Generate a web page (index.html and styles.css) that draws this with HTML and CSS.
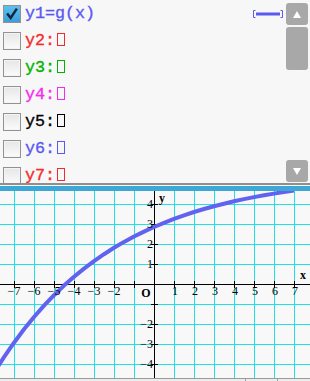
FILE: index.html
```html
<!DOCTYPE html>
<html lang="en">
<head>
  <meta charset="UTF-8" />
  <title>Graph Editor</title>
  <link rel="stylesheet" href="styles.css">
</head>
<body>
  <div class="app">
    <div class="panel">
      <ul class="rows">
        <li class="row">
          <span class="check on">
            <svg viewBox="0 0 18 18" width="16" height="16"><path d="M3.5 8.5 L7.5 13.5 L14.5 3" fill="none" stroke="#15243f" stroke-width="2.8"/></svg>
          </span>
          <span class="fn blue">y1=g(x)</span>
          <span class="line-style">
            <svg viewBox="0 0 30 8" width="30" height="8"><path d="M2.5 0.5 H0.5 V7.5 H2.5 M27.5 0.5 H29.5 V7.5 H27.5" fill="none" stroke="#5a5af0"/><rect x="3" y="2.5" width="24" height="3" fill="#5a5af0"/></svg>
          </span>
        </li>
        <li class="row"><span class="check"></span><span class="fn red">y2:<span class="tofu"></span></span></li>
        <li class="row"><span class="check"></span><span class="fn green">y3:<span class="tofu"></span></span></li>
        <li class="row"><span class="check"></span><span class="fn pink">y4:<span class="tofu"></span></span></li>
        <li class="row"><span class="check"></span><span class="fn black">y5:<span class="tofu"></span></span></li>
        <li class="row"><span class="check"></span><span class="fn blue">y6:<span class="tofu"></span></span></li>
        <li class="row"><span class="check"></span><span class="fn red">y7:<span class="tofu"></span></span></li>
      </ul>
      <div class="scroll">
        <div class="sb-btn"><svg viewBox="0 0 8 7" width="8" height="7"><path d="M4 0 L8 7 H0 Z" fill="#fff"/></svg></div>
        <div class="sb-thumb"></div>
        <div class="sb-space"></div>
        <div class="sb-btn"><svg viewBox="0 0 8 7" width="8" height="7"><path d="M0 0 H8 L4 7 Z" fill="#fff"/></svg></div>
      </div>
    </div>

    <div class="divider"></div>

    <!-- graph window: origin at (154, 93), 20px per unit -->
    <svg class="graph" width="310" height="187" viewBox="0 0 310 187">
      <defs><clipPath id="plot"><rect x="0" y="0" width="310" height="187"/></clipPath></defs>
      <g stroke="#1de3e6" stroke-width="1">
        <path d="M14.5 0V187 M34.5 0V187 M54.5 0V187 M74.5 0V187 M94.5 0V187 M114.5 0V187 M134.5 0V187 M174.5 0V187 M194.5 0V187 M214.5 0V187 M234.5 0V187 M254.5 0V187 M274.5 0V187 M294.5 0V187"/>
        <path d="M0 13.5H310 M0 33.5H310 M0 53.5H310 M0 73.5H310 M0 113.5H310 M0 133.5H310 M0 153.5H310 M0 173.5H310"/>
      </g>
      <g stroke="#000" stroke-width="1">
        <path d="M154.5 0V187 M0 93.5H310"/>
        <path d="M14.5 90V97 M34.5 90V97 M54.5 90V97 M74.5 90V97 M94.5 90V97 M114.5 90V97 M134.5 90V97 M174.5 90V97 M194.5 90V97 M214.5 90V97 M234.5 90V97 M254.5 90V97 M274.5 90V97 M294.5 90V97"/>
        <path d="M151 13.5H158 M151 33.5H158 M151 53.5H158 M151 73.5H158 M151 113.5H158 M151 133.5H158 M151 153.5H158 M151 173.5H158"/>
      </g>
      <polyline clip-path="url(#plot)" fill="none" stroke="#6262f0" stroke-width="4" stroke-linejoin="round"
        points="-2,175.5 4,166.2 14,151.7 24,138.3 34,126 44,114.6 54,104.2 64,94.6 74,85.7 84,77.6 94,70.1 104,63.2 114,56.8 124,50.9 134,45.5 144,40.6 154,36 164,31.8 174,27.9 184,24.3 194,21 204,18 214,15.2 224,12.7 234,10.3 244,8.1 254,6.1 264,4.3 274,2.6 284,1 294,-0.4"/>
      <g class="ticks" text-anchor="middle">
        <text x="14" y="104">−7</text>
        <text x="34" y="104">−6</text>
        <text x="54" y="104">−5</text>
        <text x="74" y="104">−4</text>
        <text x="94" y="104">−3</text>
        <text x="114" y="104">−2</text>
        <text x="175" y="104">1</text>
        <text x="195" y="104">2</text>
        <text x="215" y="104">3</text>
        <text x="235" y="104">4</text>
        <text x="255" y="104">5</text>
        <text x="275" y="104">6</text>
        <text x="295" y="104">7</text>
      </g>
      <g class="ticks" text-anchor="end">
        <text x="153" y="17">4</text>
        <text x="153" y="37">3</text>
        <text x="153" y="57">2</text>
        <text x="153" y="77">1</text>
        <text x="153" y="137">−2</text>
        <text x="153" y="157">−3</text>
        <text x="153" y="177">−4</text>
      </g>
      <text class="axis-name" x="146" y="106" text-anchor="middle">O</text>
      <text class="axis-name" x="303" y="88" text-anchor="middle">x</text>
      <text class="axis-name" x="162" y="11" text-anchor="middle">y</text>
    </svg>

    <div class="toolbar">
      <span class="tb-cell wide"></span>
      <span class="tb-cell"></span>
      <span class="tb-cell"></span>
    </div>
  </div>
</body>
</html>
```

FILE: styles.css
```css
* {
  box-sizing: border-box;
}
body {
  margin: 0;
  background: #f7f7f7;
}
.app {
  width: 310px;
  height: 381px;
  display: flex;
  flex-direction: column;
  overflow: hidden;
}

/* function list */
.panel {
  height: 183px;
  display: flex;
  background: #f7f7f7;
}
.rows {
  flex: 1;
  list-style: none;
  margin: 0;
  padding: 0;
}
.row {
  height: 27px;
  display: flex;
  align-items: center;
  padding-left: 3px;
}
.check {
  width: 18px;
  height: 18px;
  flex: none;
  border: 1px solid #929292;
  background: linear-gradient(#e6e6e6, #fbfbfb);
  box-shadow: inset 0 0 0 1px #f4f4f4;
  display: flex;
  align-items: center;
  justify-content: center;
}
.check.on {
  background: linear-gradient(#5cc0ee, #3a9fd8);
  box-shadow: none;
}
.fn {
  margin-left: 4px;
  font-family: "Liberation Mono", monospace;
  font-size: 16.7px;
  line-height: 20px;
  white-space: nowrap;
  -webkit-text-stroke: 0.35px currentColor;
}
.tofu {
  display: inline-block;
  width: 8px;
  height: 13px;
  margin-left: 2px;
  border: 1px solid currentColor;
  vertical-align: -1px;
}
.blue { color: #5a5af0; }
.red { color: #f62a2a; }
.green { color: #00b400; }
.pink { color: #f52cf0; }
.black { color: #000; }
.line-style {
  margin-left: auto;
  margin-right: 1px;
  display: flex;
}

/* scroll bar */
.scroll {
  width: 22px;
  margin: 3px 2px 1px 2px;
  display: flex;
  flex-direction: column;
  gap: 2px;
}
.sb-btn {
  height: 22px;
  background: #a8a8a8;
  border-radius: 3px;
  display: flex;
  align-items: center;
  justify-content: center;
}
.sb-thumb {
  height: 43px;
  background: #a8a8a8;
  border-radius: 3px;
}
.sb-space {
  flex: 1;
}

/* splitter between list and graph */
.divider {
  height: 8px;
  flex: none;
  border-top: 2px solid #8f8f8f;
  border-bottom: 5px solid #3ea7d6;
  background: #f7f7f7;
}

/* graph */
.graph {
  display: block;
  flex: none;
  background: #f8f8f8;
}
.ticks text {
  font-family: "Liberation Serif", serif;
  font-size: 12px;
  fill: #000;
}
.axis-name {
  font-family: "Liberation Serif", serif;
  font-size: 12px;
  font-weight: bold;
  fill: #000;
}

.toolbar {
  flex: 1;
  display: flex;
  border-top: 1px solid #9a9a9a;
  background: #ececec;
}
.tb-cell {
  width: 32px;
  border-left: 1px solid #a0a0a0;
}
.tb-cell.wide {
  width: 245px;
  border-left: none;
}
```
